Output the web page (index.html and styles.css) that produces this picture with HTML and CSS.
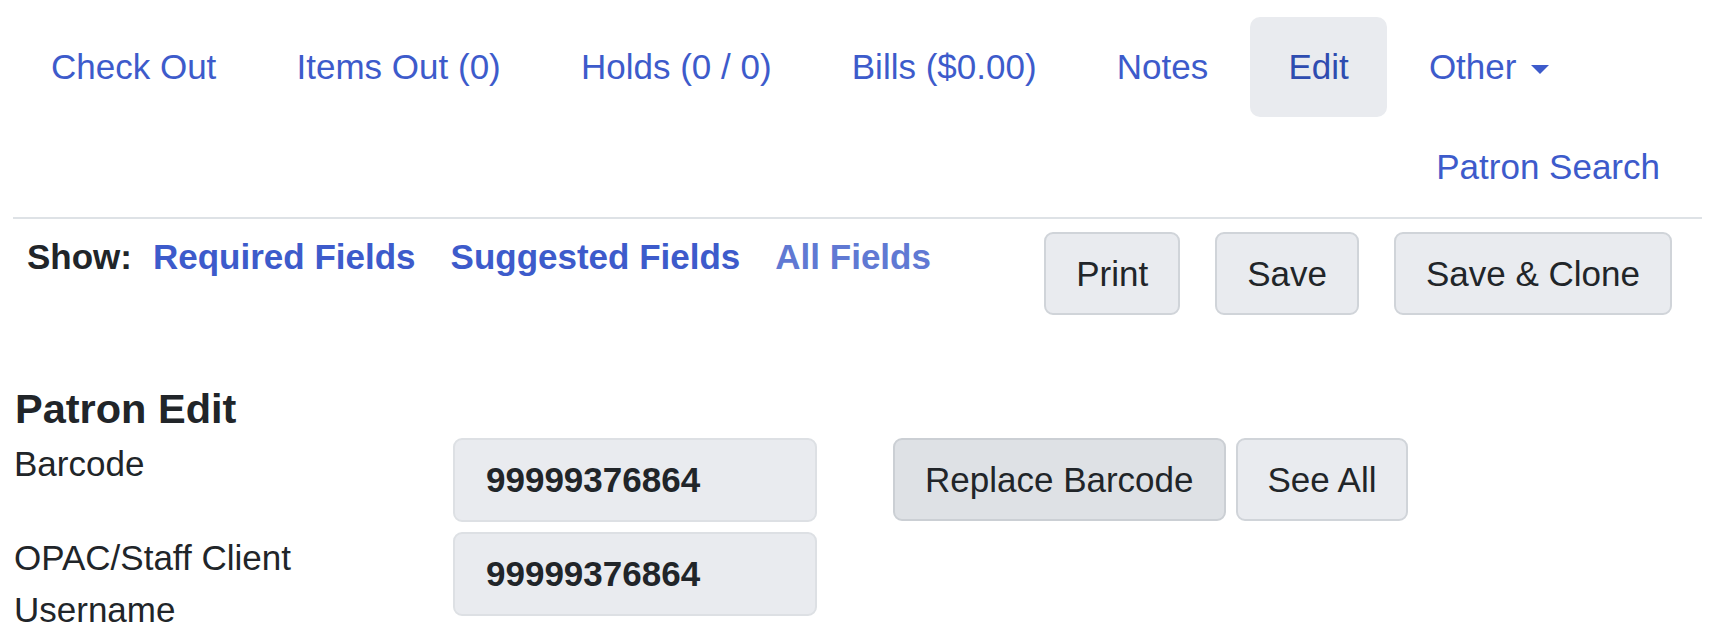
FILE: index.html
```html
<!DOCTYPE html>
<html lang="en">
<head>
<meta charset="utf-8">
<title>Patron Edit</title>
<link rel="stylesheet" href="styles.css">
</head>
<body>
<div class="page">
  <ul class="tabs">
    <li class="tab"><a class="tab-link" href="#">Check Out</a></li>
    <li class="tab"><a class="tab-link" href="#">Items Out (0)</a></li>
    <li class="tab"><a class="tab-link" href="#">Holds (0 / 0)</a></li>
    <li class="tab"><a class="tab-link" href="#">Bills ($0.00)</a></li>
    <li class="tab"><a class="tab-link" href="#">Notes</a></li>
    <li class="tab"><a class="tab-link active" href="#">Edit</a></li>
    <li class="tab"><a class="tab-link" href="#">Other<span class="caret"></span></a></li>
    <li class="tab tab-right"><a class="tab-link" href="#">Patron Search</a></li>
  </ul>

  <div class="toolbar">
    <div class="show">
      <span class="show-label">Show:</span>
      <a class="show-link" href="#">Required Fields</a>
      <a class="show-link" href="#">Suggested Fields</a>
      <a class="show-link visited" href="#">All Fields</a>
    </div>
    <div class="actions">
      <button class="btn" type="button">Print</button>
      <button class="btn" type="button">Save</button>
      <button class="btn" type="button">Save &amp; Clone</button>
    </div>
  </div>

  <h2 class="title">Patron Edit</h2>

  <div class="field-row">
    <label class="field-label">Barcode</label>
    <input class="field-input" type="text" value="99999376864" readonly>
    <div class="field-actions">
      <button class="btn btn-active" type="button">Replace Barcode</button>
      <button class="btn" type="button">See All</button>
    </div>
  </div>

  <div class="field-row">
    <label class="field-label">OPAC/Staff Client Username</label>
    <input class="field-input" type="text" value="99999376864" readonly>
  </div>
</div>
</body>
</html>
```

FILE: styles.css
```css
html, body {
  margin: 0;
  padding: 0;
  background: #ffffff;
}

body {
  font-family: "Liberation Sans", Arial, sans-serif;
  font-size: 35px;
  color: #212529;
}

.page {
  margin: 0 12px 0 13px;
  padding-top: 17px;
}

/* ---------- tabs ---------- */
.tabs {
  list-style: none;
  margin: 0;
  padding: 0;
  display: flex;
  flex-wrap: wrap;
  border-bottom: 2px solid #dee2e6;
}

.tab {
  margin-right: 4.2px;
}

.tab-right {
  margin-left: auto;
  margin-right: 4px;
}

.tab-link {
  display: block;
  padding: 24px 38px;
  line-height: 52px;
  color: #3d5bcb;
  text-decoration: none;
  border-radius: 10px;
  white-space: nowrap;
}

.tab-link.active {
  background: #e9ebef;
  color: #2e4cb0;
}

.caret {
  display: inline-block;
  width: 0;
  height: 0;
  margin-left: 15px;
  vertical-align: 5px;
  border-top: 9px solid #3d5bcb;
  border-left: 9.5px solid transparent;
  border-right: 9.5px solid transparent;
}

/* ---------- toolbar ---------- */
.toolbar {
  display: flex;
  justify-content: space-between;
  align-items: flex-start;
  margin-top: 12px;
}

.show {
  padding-left: 14px;
  line-height: 52px;
  font-weight: bold;
  display: flex;
  gap: 35px;
}

.show-label {
  margin-right: -14px;
}

.show-link {
  color: #3d5bcb;
  text-decoration: none;
}

.show-link.visited {
  color: #6079d3;
}

.actions {
  display: flex;
  gap: 35px;
  margin-top: 1px;
  margin-right: 30px;
}

.btn {
  font-family: inherit;
  font-size: 35px;
  line-height: 52px;
  color: #212529;
  background: #e9ebef;
  border: 2px solid #d0d4d9;
  border-radius: 9px;
  padding: 13.5px 30px;
  margin: 0;
  white-space: nowrap;
}

.btn-active {
  background: #dee1e5;
  border-color: #cbcfd4;
}

/* ---------- form ---------- */
.title {
  font-size: 41.5px;
  line-height: 50px;
  font-weight: bold;
  margin: 69px 0 4px 2px;
}

.field-row {
  display: flex;
  align-items: flex-start;
}

.field-label {
  width: 410px;
  padding: 0 30px 0 1px;
  line-height: 52px;
  flex: none;
}

.field-input {
  flex: none;
  box-sizing: border-box;
  width: 364px;
  height: 84px;
  margin: 0 0 10px -1px;
  padding: 14px 31px;
  font-family: inherit;
  font-size: 35px;
  font-weight: bold;
  line-height: 52px;
  color: #212529;
  background: #e9ebef;
  border: 2px solid #dde0e4;
  border-radius: 9px;
  outline: none;
}

.field-actions {
  display: flex;
  gap: 10px;
  margin-left: 76px;
}
```
